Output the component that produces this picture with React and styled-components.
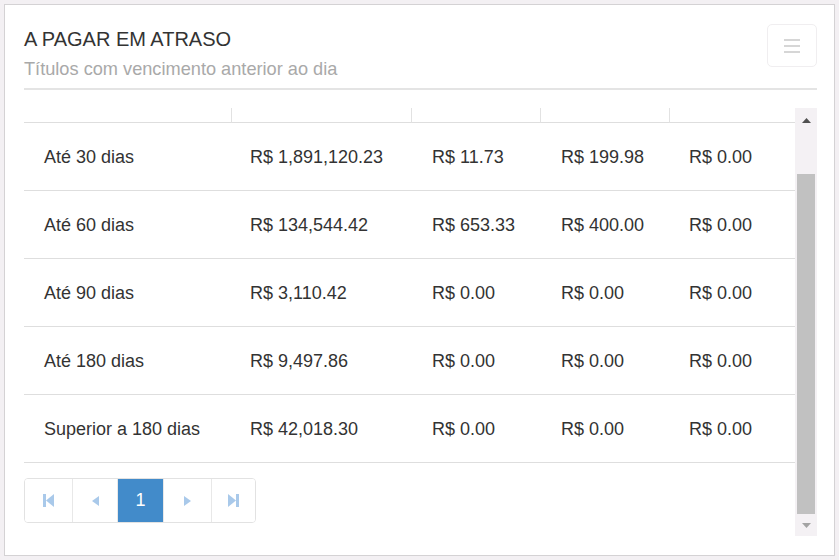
import React from "react";
import styled, { createGlobalStyle } from "styled-components";

const GlobalStyle = createGlobalStyle`
  html, body {
    margin: 0;
    padding: 0;
  }
  body {
    background: #f3f0f3;
    padding: 4px;
    font-family: "Liberation Sans", Arial, sans-serif;
    color: #333;
  }
  * { box-sizing: border-box; }
`;

const Card = styled.div`
  height: 552px;
  background: #fff;
  border: 1px solid #d4d2d4;
  padding: 19px 17px 0 19px;
`;

const Header = styled.div`
  display: flex;
  justify-content: space-between;
  align-items: flex-start;
  height: 66px;
  border-bottom: 2px solid #e4e4e4;
`;

const Titles = styled.div`
  display: flex;
  flex-direction: column;
`;

const Title = styled.h1`
  margin: 3px 0 0;
  font-size: 20px;
  line-height: 24px;
  font-weight: normal;
  color: #333;
`;

const Subtitle = styled.div`
  margin-top: 7px;
  font-size: 18.2px;
  line-height: 22px;
  color: #a9a9a9;
`;

const MenuButton = styled.button`
  width: 50px;
  height: 43px;
  background: #fff;
  border: 1px solid #f0eef0;
  border-radius: 5px;
  display: flex;
  flex-direction: column;
  align-items: center;
  justify-content: center;
  gap: 4px;
  padding: 0;
`;

const MenuLine = styled.span`
  display: block;
  width: 16px;
  height: 2px;
  background: #d6d6d6;
`;

const ScrollArea = styled.div`
  margin-top: 18px;
  height: 428px;
  display: flex;
`;

const Content = styled.div`
  flex: 1;
  overflow: hidden;
`;

const Grid = styled.div`
  display: grid;
  grid-template-columns: 207px 180px 129px 129px 1fr;
`;

const StubCell = styled.div`
  height: 15px;
  border-bottom: 1px solid #dedede;
  border-left: ${(p) => (p.$first ? "none" : "1px solid #e2e2e2")};
`;

const Cell = styled.div`
  height: 68px;
  display: flex;
  align-items: center;
  padding-left: ${(p) => p.$pad}px;
  padding-top: 1px;
  border-bottom: 1px solid #dedede;
  font-size: 18px;
  color: #333;
  white-space: nowrap;
`;

const Pager = styled.div`
  display: inline-flex;
  margin-top: 15px;
  border: 1px solid #e2e2e2;
  border-radius: 4px;
  overflow: hidden;
  height: 45px;
`;

const PageButton = styled.div`
  width: ${(p) => p.$w}px;
  display: flex;
  align-items: center;
  justify-content: center;
  border-left: ${(p) => (p.$first ? "none" : "1px solid #e8e8e8")};
  background: ${(p) => (p.$active ? "#428bca" : "#fff")};
  color: #fff;
  font-size: 18px;
`;

const ScrollBar = styled.div`
  width: 22px;
  background: #f4f1f4;
  display: flex;
  flex-direction: column;
`;

const ArrowBtn = styled.div`
  height: ${(p) => p.$h}px;
  display: flex;
  align-items: center;
  justify-content: center;
  flex: ${(p) => (p.$grow ? 1 : "none")};
`;

const Spacer = styled.div`
  height: ${(p) => p.$h}px;
`;

const Thumb = styled.div`
  height: 340px;
  margin: 0 2px;
  background: #c1c1c1;
`;

const rows = [
  ["Até 30 dias", "R$ 1,891,120.23", "R$ 11.73", "R$ 199.98", "R$ 0.00"],
  ["Até 60 dias", "R$ 134,544.42", "R$ 653.33", "R$ 400.00", "R$ 0.00"],
  ["Até 90 dias", "R$ 3,110.42", "R$ 0.00", "R$ 0.00", "R$ 0.00"],
  ["Até 180 dias", "R$ 9,497.86", "R$ 0.00", "R$ 0.00", "R$ 0.00"],
  ["Superior a 180 dias", "R$ 42,018.30", "R$ 0.00", "R$ 0.00", "R$ 0.00"],
];

const pads = [20, 19, 21, 21, 20];

const iconColor = "#a9c9ea";

const FirstIcon = () => (
  <svg width="11" height="13" viewBox="0 0 11 13">
    <rect x="0" y="0" width="3" height="13" fill={iconColor} />
    <polygon points="11,0 11,13 3,6.5" fill={iconColor} />
  </svg>
);

const LastIcon = () => (
  <svg width="11" height="13" viewBox="0 0 11 13">
    <rect x="8" y="0" width="3" height="13" fill={iconColor} />
    <polygon points="0,0 0,13 8,6.5" fill={iconColor} />
  </svg>
);

const PrevIcon = () => (
  <svg width="7" height="10" viewBox="0 0 7 10">
    <polygon points="7,0 7,10 0,5" fill={iconColor} />
  </svg>
);

const NextIcon = () => (
  <svg width="7" height="10" viewBox="0 0 7 10">
    <polygon points="0,0 0,10 7,5" fill={iconColor} />
  </svg>
);

const Tri = ({ up, color }) => (
  <svg width="9" height="5" viewBox="0 0 9 5">
    <polygon points={up ? "0,5 9,5 4.5,0" : "0,0 9,0 4.5,5"} fill={color} />
  </svg>
);

export default function App() {
  return (
    <>
      <GlobalStyle />
      <Card>
        <Header>
          <Titles>
            <Title>A PAGAR EM ATRASO</Title>
            <Subtitle>Títulos com vencimento anterior ao dia</Subtitle>
          </Titles>
          <MenuButton aria-label="menu">
            <MenuLine />
            <MenuLine />
            <MenuLine />
          </MenuButton>
        </Header>
        <ScrollArea>
          <Content>
            <Grid>
              {[0, 1, 2, 3, 4].map((i) => (
                <StubCell key={"s" + i} $first={i === 0} />
              ))}
              {rows.map((r, ri) =>
                r.map((c, ci) => (
                  <Cell key={ri + "-" + ci} $pad={pads[ci]}>
                    {c}
                  </Cell>
                ))
              )}
            </Grid>
            <Pager>
              <PageButton $w={47} $first>
                <FirstIcon />
              </PageButton>
              <PageButton $w={45}>
                <PrevIcon />
              </PageButton>
              <PageButton $w={46} $active>
                1
              </PageButton>
              <PageButton $w={48}>
                <NextIcon />
              </PageButton>
              <PageButton $w={44}>
                <LastIcon />
              </PageButton>
            </Pager>
          </Content>
          <ScrollBar>
            <ArrowBtn $h={24}>
              <Tri up color="#505050" />
            </ArrowBtn>
            <Spacer $h={42} />
            <Thumb />
            <ArrowBtn $grow>
              <Tri color="#a3a3a3" />
            </ArrowBtn>
          </ScrollBar>
        </ScrollArea>
      </Card>
    </>
  );
}
